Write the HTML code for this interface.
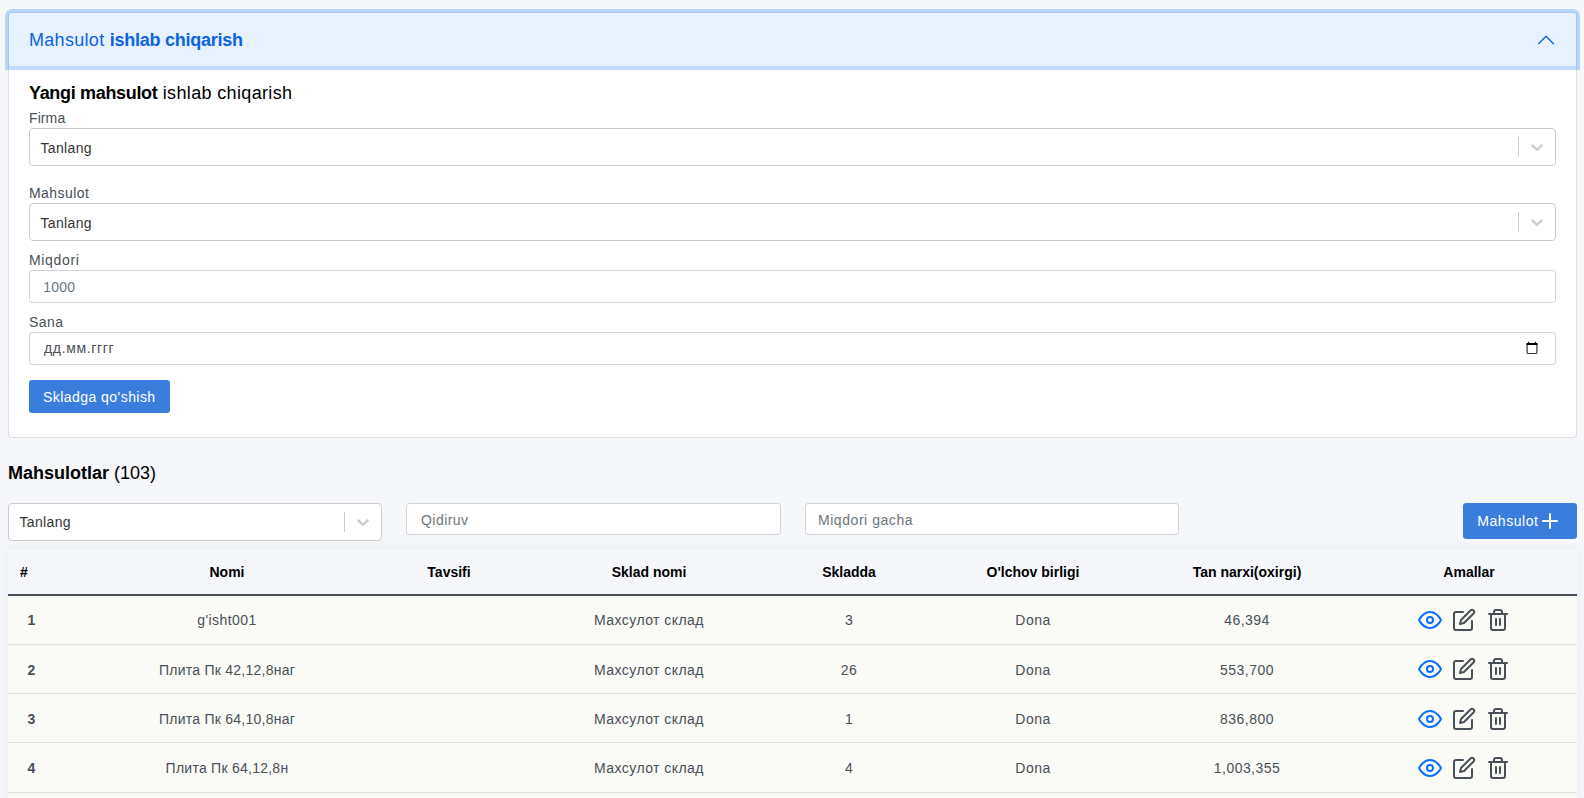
<!DOCTYPE html>
<html><head><meta charset="utf-8">
<style>
*{box-sizing:border-box;margin:0;padding:0}
html,body{width:1584px;height:798px;overflow:hidden;background:#f5f7fb;font-family:"Liberation Sans",sans-serif;font-size:14px;color:#495057}
.a{position:absolute;white-space:nowrap;line-height:1}
.r{letter-spacing:.45px}
.rb{letter-spacing:0}
b{font-weight:700}
.item{position:absolute;left:8px;top:12px;width:1569px;height:426px;background:#fff;border:1px solid rgba(0,0,0,.125);border-radius:4px}
.hdr{position:absolute;left:9px;top:13px;width:1567px;height:53px;background:#e7f1ff;border-radius:3px 3px 0 0;box-shadow:0 0 0 4px rgba(13,110,253,.25)}
.sel{position:absolute;background:#fff;border:1px solid #ccc;border-radius:4px;height:38px}
.sel .dv{position:absolute;top:8px;width:1px;height:20px;background:#ccc}
.sel svg{position:absolute;top:8px}
.inp{position:absolute;background:#fff;border:1px solid #ced4da;border-radius:3.2px}
.btn{position:absolute;background:#3b7ddd;border-radius:3.2px;color:#fff}
.tbl{position:absolute;left:8px;top:549px;width:1569px;height:260px;border-radius:4px;box-shadow:0 0 14px 0 rgba(33,37,41,.05)}
.thd{position:absolute;left:8px;top:549px;width:1569px;height:45px;background:#f5f7fb;border-radius:4px 4px 0 0}
.tline{position:absolute;left:8px;top:594px;width:1569px;height:2px;background:#495057}
.row{position:absolute;left:8px;width:1569px;background:#fafaf6;border-bottom:1px solid #dee2e6}
.th{font-weight:700;color:#000}
.c{transform:translateX(-50%)}
</style></head><body>
<div class="item"></div><div class="hdr"></div>
<div class="a" style="left:29px;top:31px;font-size:18px;color:#0c63e4"><span style="letter-spacing:.3px">Mahsulot </span><b style="letter-spacing:-.25px">ishlab chiqarish</b></div>
<svg style="position:absolute;left:1536px;top:30px" width="20" height="20" viewBox="0 0 16 16"><path fill="#0c63e4" transform="rotate(180 8 8)" d="M1.646 4.646a.5.5 0 0 1 .708 0L8 10.293l5.646-5.647a.5.5 0 0 1 .708.708l-6 6a.5.5 0 0 1-.708 0l-6-6a.5.5 0 0 1 0-.708z"/></svg>
<div class="a" style="left:29px;top:84px;font-size:18px;color:#000"><b style="letter-spacing:-.33px">Yangi mahsulot</b><span style="letter-spacing:.35px"> ishlab chiqarish</span></div>
<div class="a" style="left:29px;top:111px;letter-spacing:.1px">Firma</div>
<div class="sel" style="left:29px;top:128px;width:1527px"><div class="a" style="left:10.5px;top:12px;color:#333;letter-spacing:.35px">Tanlang</div><div class="dv" style="left:1488px"></div><svg style="left:1497px" width="20" height="20" viewBox="0 0 20 20"><path fill="#ccc" d="M4.516 7.548c0.436-0.446 1.043-0.481 1.576 0l3.908 3.747 3.908-3.747c0.533-0.481 1.141-0.446 1.574 0 0.436 0.445 0.408 1.197 0 1.615-0.406 0.418-4.695 4.502-4.695 4.502-0.217 0.223-0.502 0.335-0.787 0.335s-0.57-0.112-0.789-0.335c0 0-4.287-4.084-4.695-4.502s-0.436-1.17 0-1.615z"/></svg></div>
<div class="a r" style="left:29px;top:186px">Mahsulot</div>
<div class="sel" style="left:29px;top:203px;width:1527px"><div class="a" style="left:10.5px;top:12px;color:#333;letter-spacing:.35px">Tanlang</div><div class="dv" style="left:1488px"></div><svg style="left:1497px" width="20" height="20" viewBox="0 0 20 20"><path fill="#ccc" d="M4.516 7.548c0.436-0.446 1.043-0.481 1.576 0l3.908 3.747 3.908-3.747c0.533-0.481 1.141-0.446 1.574 0 0.436 0.445 0.408 1.197 0 1.615-0.406 0.418-4.695 4.502-4.695 4.502-0.217 0.223-0.502 0.335-0.787 0.335s-0.57-0.112-0.789-0.335c0 0-4.287-4.084-4.695-4.502s-0.436-1.17 0-1.615z"/></svg></div>
<div class="a" style="left:29px;top:253px;letter-spacing:.65px">Miqdori</div>
<div class="inp" style="left:29px;top:270px;width:1527px;height:33px"><div class="a" style="left:13.2px;top:9px;color:#6c757d;letter-spacing:.25px">1000</div></div>
<div class="a r" style="left:29px;top:315px">Sana</div>
<div class="inp" style="left:29px;top:332px;width:1527px;height:33px"><div class="a" style="left:14px;top:8px;letter-spacing:.65px">дд.мм.гггг</div><svg style="position:absolute;left:1490px;top:3px" width="24" height="24" viewBox="0 0 24 24"><rect x="7.1" y="7.5" width="9.8" height="10" rx="1" fill="none" stroke="#333" stroke-width="1.2"/><rect x="6.5" y="7" width="11" height="2" fill="#000"/><path d="M8 7 L8.7 5.2 L9.6 7Z M14.6 7 L15.4 5.2 L16.1 7Z" fill="#000"/></svg></div>
<div class="btn" style="left:29px;top:380px;width:141px;height:33px"><div class="a r" style="left:14px;top:10px">Skladga qo'shish</div></div>
<div class="a" style="left:8px;top:464px;font-size:18px;color:#000"><b>Mahsulotlar</b> (103)</div>
<div class="sel" style="left:8px;top:503px;width:374px"><div class="a" style="left:10.5px;top:11px;color:#333;letter-spacing:.35px">Tanlang</div><div class="dv" style="left:335px"></div><svg style="left:344px" width="20" height="20" viewBox="0 0 20 20"><path fill="#ccc" d="M4.516 7.548c0.436-0.446 1.043-0.481 1.576 0l3.908 3.747 3.908-3.747c0.533-0.481 1.141-0.446 1.574 0 0.436 0.445 0.408 1.197 0 1.615-0.406 0.418-4.695 4.502-4.695 4.502-0.217 0.223-0.502 0.335-0.787 0.335s-0.57-0.112-0.789-0.335c0 0-4.287-4.084-4.695-4.502s-0.436-1.17 0-1.615z"/></svg></div>
<div class="inp" style="left:406px;top:503px;width:375px;height:32px"><div class="a r" style="left:14px;top:9px;color:#6c757d">Qidiruv</div></div>
<div class="inp" style="left:805px;top:503px;width:374px;height:32px"><div class="a" style="left:12px;top:9px;color:#6c757d;letter-spacing:.55px">Miqdori gacha</div></div>
<div class="btn" style="left:1463px;top:503px;width:114px;height:36px"><div class="a" style="left:14.3px;top:11px;letter-spacing:.55px">Mahsulot</div><svg style="position:absolute;left:75px;top:6px" width="24" height="24" viewBox="0 0 24 24" fill="none" stroke="#fff" stroke-width="2" stroke-linecap="round"><line x1="12" y1="5" x2="12" y2="19"/><line x1="5" y1="12" x2="19" y2="12"/></svg></div>
<div class="tbl"></div><div class="thd"></div>
<div class="a th" style="left:20px;top:565px">#</div>
<div class="a th c" style="left:227px;top:565px">Nomi</div>
<div class="a th c" style="left:449px;top:565px">Tavsifi</div>
<div class="a th c" style="left:649px;top:565px">Sklad nomi</div>
<div class="a th c" style="left:849px;top:565px">Skladda</div>
<div class="a th c" style="left:1033px;top:565px">O'lchov birligi</div>
<div class="a th c" style="left:1247px;top:565px">Tan narxi(oxirgi)</div>
<div class="a th c" style="left:1469px;top:565px">Amallar</div>
<div class="tline"></div>
<div class="row" style="top:596px;height:49px"></div>
<div class="a c" style="left:31.5px;top:613px;font-weight:700">1</div>
<div class="a c" style="left:227px;top:613px;letter-spacing:0.45px">g'isht001</div>
<div class="a c r" style="left:649px;top:613px">Махсулот склад</div>
<div class="a c r" style="left:849px;top:613px">3</div>
<div class="a c r" style="left:1033px;top:613px">Dona</div>
<div class="a c r" style="left:1247px;top:613px">46,394</div>
<svg style="position:absolute;left:1418px;top:608px" width="24" height="24" viewBox="0 0 24 24" fill="none" stroke="#0d6efd" stroke-width="2" stroke-linecap="round" stroke-linejoin="round"><path d="M1 12s4-8 11-8 11 8 11 8-4 8-11 8-11-8-11-8z"/><circle cx="12" cy="12" r="3"/></svg>
<svg style="position:absolute;left:1452px;top:608px" width="24" height="24" viewBox="0 0 24 24" fill="none" stroke="#495057" stroke-width="2" stroke-linecap="round" stroke-linejoin="round"><path d="M11 4H4a2 2 0 0 0-2 2v14a2 2 0 0 0 2 2h14a2 2 0 0 0 2-2v-7"/><path d="M18.5 2.5a2.121 2.121 0 0 1 3 3L12 15l-4 1 1-4 9.5-9.5z"/></svg>
<svg style="position:absolute;left:1486px;top:608px" width="24" height="24" viewBox="0 0 24 24" fill="none" stroke="#495057" stroke-width="2" stroke-linecap="round" stroke-linejoin="round"><polyline points="3 6 5 6 21 6"/><path d="M19 6v14a2 2 0 0 1-2 2H7a2 2 0 0 1-2-2V6m3 0V4a2 2 0 0 1 2-2h4a2 2 0 0 1 2 2v2"/><line x1="10" y1="11" x2="10" y2="17"/><line x1="14" y1="11" x2="14" y2="17"/></svg>
<div class="row" style="top:645px;height:49px"></div>
<div class="a c" style="left:31.5px;top:663px;font-weight:700">2</div>
<div class="a c" style="left:227px;top:663px;letter-spacing:0.25px">Плита Пк 42,12,8наг</div>
<div class="a c r" style="left:649px;top:663px">Махсулот склад</div>
<div class="a c r" style="left:849px;top:663px">26</div>
<div class="a c r" style="left:1033px;top:663px">Dona</div>
<div class="a c r" style="left:1247px;top:663px">553,700</div>
<svg style="position:absolute;left:1418px;top:657px" width="24" height="24" viewBox="0 0 24 24" fill="none" stroke="#0d6efd" stroke-width="2" stroke-linecap="round" stroke-linejoin="round"><path d="M1 12s4-8 11-8 11 8 11 8-4 8-11 8-11-8-11-8z"/><circle cx="12" cy="12" r="3"/></svg>
<svg style="position:absolute;left:1452px;top:657px" width="24" height="24" viewBox="0 0 24 24" fill="none" stroke="#495057" stroke-width="2" stroke-linecap="round" stroke-linejoin="round"><path d="M11 4H4a2 2 0 0 0-2 2v14a2 2 0 0 0 2 2h14a2 2 0 0 0 2-2v-7"/><path d="M18.5 2.5a2.121 2.121 0 0 1 3 3L12 15l-4 1 1-4 9.5-9.5z"/></svg>
<svg style="position:absolute;left:1486px;top:657px" width="24" height="24" viewBox="0 0 24 24" fill="none" stroke="#495057" stroke-width="2" stroke-linecap="round" stroke-linejoin="round"><polyline points="3 6 5 6 21 6"/><path d="M19 6v14a2 2 0 0 1-2 2H7a2 2 0 0 1-2-2V6m3 0V4a2 2 0 0 1 2-2h4a2 2 0 0 1 2 2v2"/><line x1="10" y1="11" x2="10" y2="17"/><line x1="14" y1="11" x2="14" y2="17"/></svg>
<div class="row" style="top:694px;height:49px"></div>
<div class="a c" style="left:31.5px;top:712px;font-weight:700">3</div>
<div class="a c" style="left:227px;top:712px;letter-spacing:0.25px">Плита Пк 64,10,8наг</div>
<div class="a c r" style="left:649px;top:712px">Махсулот склад</div>
<div class="a c r" style="left:849px;top:712px">1</div>
<div class="a c r" style="left:1033px;top:712px">Dona</div>
<div class="a c r" style="left:1247px;top:712px">836,800</div>
<svg style="position:absolute;left:1418px;top:707px" width="24" height="24" viewBox="0 0 24 24" fill="none" stroke="#0d6efd" stroke-width="2" stroke-linecap="round" stroke-linejoin="round"><path d="M1 12s4-8 11-8 11 8 11 8-4 8-11 8-11-8-11-8z"/><circle cx="12" cy="12" r="3"/></svg>
<svg style="position:absolute;left:1452px;top:707px" width="24" height="24" viewBox="0 0 24 24" fill="none" stroke="#495057" stroke-width="2" stroke-linecap="round" stroke-linejoin="round"><path d="M11 4H4a2 2 0 0 0-2 2v14a2 2 0 0 0 2 2h14a2 2 0 0 0 2-2v-7"/><path d="M18.5 2.5a2.121 2.121 0 0 1 3 3L12 15l-4 1 1-4 9.5-9.5z"/></svg>
<svg style="position:absolute;left:1486px;top:707px" width="24" height="24" viewBox="0 0 24 24" fill="none" stroke="#495057" stroke-width="2" stroke-linecap="round" stroke-linejoin="round"><polyline points="3 6 5 6 21 6"/><path d="M19 6v14a2 2 0 0 1-2 2H7a2 2 0 0 1-2-2V6m3 0V4a2 2 0 0 1 2-2h4a2 2 0 0 1 2 2v2"/><line x1="10" y1="11" x2="10" y2="17"/><line x1="14" y1="11" x2="14" y2="17"/></svg>
<div class="row" style="top:743px;height:50px"></div>
<div class="a c" style="left:31.5px;top:761px;font-weight:700">4</div>
<div class="a c" style="left:227px;top:761px;letter-spacing:0.25px">Плита Пк 64,12,8н</div>
<div class="a c r" style="left:649px;top:761px">Махсулот склад</div>
<div class="a c r" style="left:849px;top:761px">4</div>
<div class="a c r" style="left:1033px;top:761px">Dona</div>
<div class="a c r" style="left:1247px;top:761px">1,003,355</div>
<svg style="position:absolute;left:1418px;top:756px" width="24" height="24" viewBox="0 0 24 24" fill="none" stroke="#0d6efd" stroke-width="2" stroke-linecap="round" stroke-linejoin="round"><path d="M1 12s4-8 11-8 11 8 11 8-4 8-11 8-11-8-11-8z"/><circle cx="12" cy="12" r="3"/></svg>
<svg style="position:absolute;left:1452px;top:756px" width="24" height="24" viewBox="0 0 24 24" fill="none" stroke="#495057" stroke-width="2" stroke-linecap="round" stroke-linejoin="round"><path d="M11 4H4a2 2 0 0 0-2 2v14a2 2 0 0 0 2 2h14a2 2 0 0 0 2-2v-7"/><path d="M18.5 2.5a2.121 2.121 0 0 1 3 3L12 15l-4 1 1-4 9.5-9.5z"/></svg>
<svg style="position:absolute;left:1486px;top:756px" width="24" height="24" viewBox="0 0 24 24" fill="none" stroke="#495057" stroke-width="2" stroke-linecap="round" stroke-linejoin="round"><polyline points="3 6 5 6 21 6"/><path d="M19 6v14a2 2 0 0 1-2 2H7a2 2 0 0 1-2-2V6m3 0V4a2 2 0 0 1 2-2h4a2 2 0 0 1 2 2v2"/><line x1="10" y1="11" x2="10" y2="17"/><line x1="14" y1="11" x2="14" y2="17"/></svg>
<div class="row" style="top:793px;height:10px;border:0"></div>
</body></html>
